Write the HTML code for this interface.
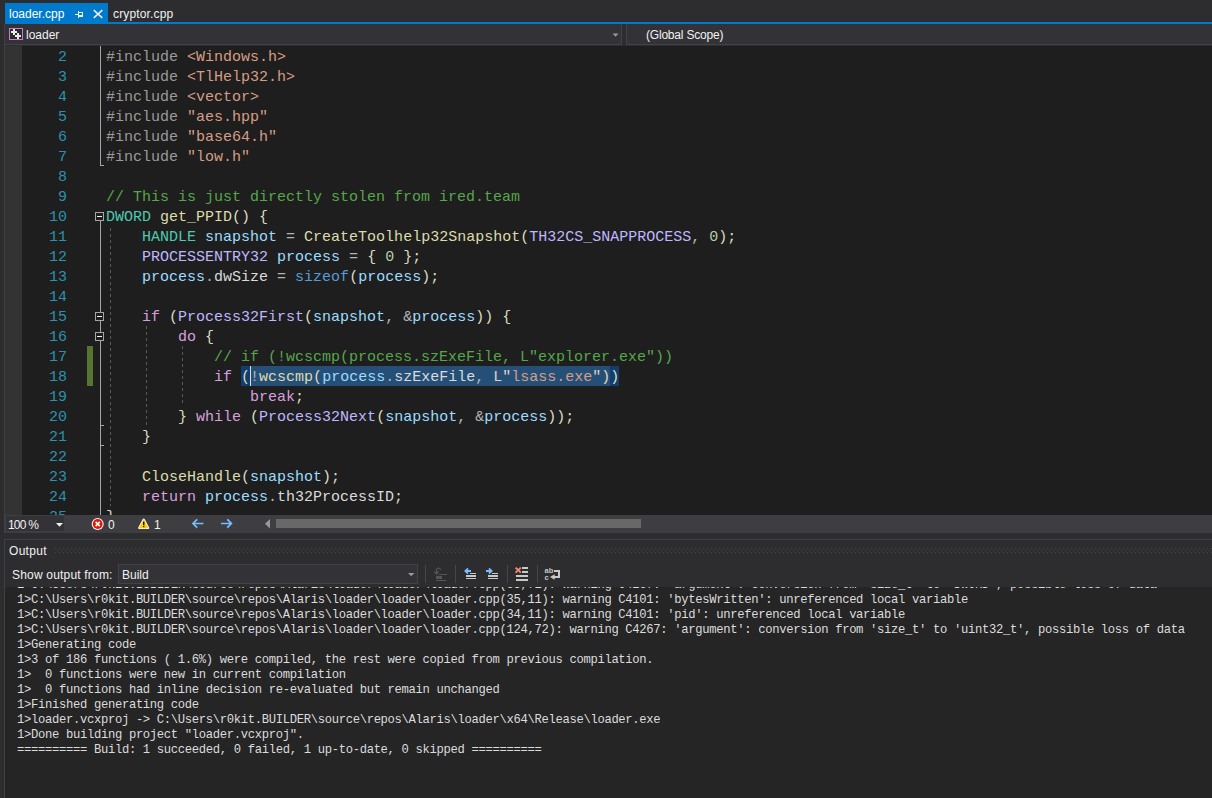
<!DOCTYPE html>
<html>
<head>
<meta charset="utf-8">
<style>
*{box-sizing:border-box;margin:0;padding:0}
html,body{width:1212px;height:798px;overflow:hidden;background:#2d2d30}
body{position:relative;font-family:"Liberation Sans",sans-serif;font-size:12px;color:#f1f1f1}
.abs{position:absolute}
.ui{position:absolute;white-space:pre;font-family:"Liberation Sans",sans-serif;font-size:12px;line-height:16px;color:#f1f1f1}
/* tab strip */
#tabact{left:5px;top:3px;width:103px;height:19px;background:#007acc}
#blueline{left:5px;top:22px;width:1207px;height:2px;background:#007acc}
/* nav bar */
#nav1{left:5px;top:24px;width:617px;height:21px;background:#333337;border-right:1px solid #434346;border-bottom:1px solid #434346}
#nav2{left:626px;top:24px;width:586px;height:21px;background:#333337;border-left:1px solid #434346;border-bottom:1px solid #434346}
/* editor */
#editor{left:5px;top:46px;width:1207px;height:469px;background:#1e1e1e;overflow:hidden}
#margin{left:0;top:0;width:17px;height:469px;background:#333333}
.ln{position:absolute;left:0;width:62px;text-align:right;color:#2b91af}
.row{position:absolute;left:0;height:20px;line-height:20px;padding-top:2px;box-sizing:content-box;white-space:pre;font-family:"Liberation Mono",monospace;font-size:15px;color:#dcdcdc}
.code{position:absolute;left:101px;top:2px}
.pp{color:#9b9b9b}.st{color:#d69d85}.cm{color:#57a64a}.ty{color:#4ec9b0}.fn{color:#dcdcaa}
.mc{color:#beb7ff}.lv{color:#9cdcfe}.kw{color:#569cd6}.ck{color:#d8a0df}.nm{color:#b5cea8}
.sd{color:#e6cfc2}.op{color:#b4b4b4}.mb{color:#dadada}.br{color:#dcdcc0}
/* bottom bar */
#hbar{left:5px;top:515px;width:1207px;height:18px;background:#3e3e42}
/* output */
#outpanel{left:4px;top:539px;width:1208px;height:259px;background:#2d2d30;border-top:1px solid #3f3f46;border-left:1px solid #3f3f46}
#outtext{left:5px;top:587px;width:1207px;height:211px;background:#252526;overflow:hidden}
.ol{position:absolute;left:12px;height:15px;line-height:15px;white-space:pre;font-family:"Liberation Mono",monospace;font-size:12.2px;letter-spacing:-0.321px;color:#dcdcdc}
</style>
</head>
<body>
<!-- TAB STRIP -->
<div class="abs" id="tabact"></div>
<div class="ui" style="left:9px;top:6px;color:#fff">loader.cpp</div>
<svg class="abs" style="left:74px;top:9px" width="12" height="11" viewBox="74 9 12 11" shape-rendering="crispEdges"><g fill="#f1f1f1"><rect x="75" y="14" width="3" height="1"/><rect x="78" y="11" width="1" height="7"/><rect x="79" y="12" width="4" height="1"/><rect x="82" y="12" width="1" height="5"/><rect x="79" y="15" width="4" height="2"/></g></svg>
<svg class="abs" style="left:92px;top:8px" width="13" height="12" viewBox="92 8 13 12"><path d="M93.8 10.1 L102.3 17.9 M102.3 10.1 L93.8 17.9" stroke="#f1f1f1" stroke-width="1.45" fill="none"/></svg>
<div class="ui" style="left:113px;top:6px;letter-spacing:0.15px">cryptor.cpp</div>
<div class="abs" id="blueline"></div>
<div class="abs" style="left:4px;top:24px;width:1px;height:509px;background:#3f3f46"></div>
<!-- NAV -->
<div class="abs" id="nav1"></div>
<div class="abs" id="nav2"></div>
<svg class="abs" style="left:9px;top:28px" width="14" height="12" viewBox="9 28 14 12" shape-rendering="crispEdges"><rect x="9.5" y="28.5" width="13" height="11" fill="#2a2a2d" stroke="#c27fc5"/><g fill="#e8e8e8"><rect x="13" y="29" width="2" height="6"/><rect x="11" y="31" width="6" height="2"/><rect x="17" y="33" width="2" height="6"/><rect x="15" y="35" width="6" height="2"/></g></svg>
<div class="ui" style="left:26px;top:27px">loader</div>
<svg class="abs" style="left:612px;top:33px" width="8" height="5" viewBox="0 0 8 5"><path d="M0.5 0.5 L6.5 0.5 L3.5 3.8 Z" fill="#999"/></svg>
<div class="ui" style="left:646px;top:27px;letter-spacing:-0.2px">(Global Scope)</div>
<!-- EDITOR -->
<div class="abs" id="editor">
<div class="abs" id="margin"></div>
<!-- change bar -->
<div class="abs" style="left:82px;top:300px;width:6px;height:40px;background:#577430"></div>
<!-- selection / brace match -->
<div class="abs" style="left:236px;top:320px;width:9px;height:20px;background:#113d6f"></div>
<div class="abs" style="left:245px;top:320px;width:360px;height:20px;background:#264f78"></div>
<div class="abs" style="left:605px;top:320px;width:9px;height:20px;background:#113d6f"></div>
<div class="abs" style="left:245px;top:320px;width:1px;height:20px;background:#dcdcdc"></div>
<!-- outlining -->
<svg class="abs" style="left:88px;top:0" width="110" height="469" viewBox="93 46 110 469" shape-rendering="crispEdges">
<g fill="#a5a5a5">
<rect x="100" y="46" width="1" height="120"/><rect x="100" y="165" width="4" height="1"/>
<rect x="100" y="221" width="1" height="91"/>
<rect x="100" y="321" width="1" height="11"/>
<rect x="100" y="341" width="1" height="174"/>
<rect x="100" y="425" width="4" height="1"/><rect x="100" y="445" width="4" height="1"/>
</g>
<g fill="#1e1e1e" stroke="#a5a5a5">
<rect x="95.5" y="212.5" width="8" height="8"/><rect x="95.5" y="312.5" width="8" height="8"/><rect x="95.5" y="332.5" width="8" height="8"/>
</g>
<g fill="#f1f1f1"><rect x="97" y="216" width="5" height="1"/><rect x="97" y="316" width="5" height="1"/><rect x="97" y="336" width="5" height="1"/></g>
<g stroke="#5a5a5a" stroke-width="1" stroke-dasharray="3 3" fill="none">
<path d="M110.5 228 V506"/><path d="M146.5 326 V426"/><path d="M182.5 346 V406"/>
</g>
</svg>

<div class="row" style="top:0px"><span class="ln">2</span><span class="code"><span class="pp">#include</span> <span class="st">&lt;Windows.h&gt;</span></span></div>
<div class="row" style="top:20px"><span class="ln">3</span><span class="code"><span class="pp">#include</span> <span class="st">&lt;TlHelp32.h&gt;</span></span></div>
<div class="row" style="top:40px"><span class="ln">4</span><span class="code"><span class="pp">#include</span> <span class="st">&lt;vector&gt;</span></span></div>
<div class="row" style="top:60px"><span class="ln">5</span><span class="code"><span class="pp">#include</span> <span class="st">"aes.hpp"</span></span></div>
<div class="row" style="top:80px"><span class="ln">6</span><span class="code"><span class="pp">#include</span> <span class="st">"base64.h"</span></span></div>
<div class="row" style="top:100px"><span class="ln">7</span><span class="code"><span class="pp">#include</span> <span class="st">"low.h"</span></span></div>
<div class="row" style="top:120px"><span class="ln">8</span><span class="code"></span></div>
<div class="row" style="top:140px"><span class="ln">9</span><span class="code"><span class="cm">// This is just directly stolen from ired.team</span></span></div>
<div class="row" style="top:160px"><span class="ln">10</span><span class="code"><span class="ty">DWORD</span> <span class="fn">get_PPID</span><span class="br">()</span> <span class="br">{</span></span></div>
<div class="row" style="top:180px"><span class="ln">11</span><span class="code">    <span class="ty">HANDLE</span> <span class="lv">snapshot</span> <span class="op">=</span> <span class="fn">CreateToolhelp32Snapshot</span><span class="br">(</span><span class="mc">TH32CS_SNAPPROCESS</span><span class="op">,</span> <span class="nm">0</span><span class="br">);</span></span></div>
<div class="row" style="top:200px"><span class="ln">12</span><span class="code">    <span class="mc">PROCESSENTRY32</span> <span class="lv">process</span> <span class="op">=</span> <span class="br">{</span> <span class="nm">0</span> <span class="br">};</span></span></div>
<div class="row" style="top:220px"><span class="ln">13</span><span class="code">    <span class="lv">process</span><span class="op">.</span><span class="mb">dwSize</span> <span class="op">=</span> <span class="kw">sizeof</span><span class="br">(</span><span class="lv">process</span><span class="br">);</span></span></div>
<div class="row" style="top:240px"><span class="ln">14</span><span class="code"></span></div>
<div class="row" style="top:260px"><span class="ln">15</span><span class="code">    <span class="ck">if</span> <span class="br">(</span><span class="mc">Process32First</span><span class="br">(</span><span class="lv">snapshot</span><span class="op">,</span> <span class="op">&amp;</span><span class="lv">process</span><span class="br">))</span> <span class="br">{</span></span></div>
<div class="row" style="top:280px"><span class="ln">16</span><span class="code">        <span class="ck">do</span> <span class="br">{</span></span></div>
<div class="row" style="top:300px"><span class="ln">17</span><span class="code">            <span class="cm">// if (!wcscmp(process.szExeFile, L"explorer.exe"))</span></span></div>
<div class="row" style="top:320px"><span class="ln">18</span><span class="code">            <span class="ck">if</span> <span class="br">(</span><span class="op">!</span><span class="fn">wcscmp</span><span class="br">(</span><span class="lv">process</span><span class="op">.</span><span class="mb">szExeFile</span><span class="op">,</span> <span class="sd">L"</span><span class="st">lsass.exe</span><span class="sd">"</span><span class="br">))</span></span></div>
<div class="row" style="top:340px"><span class="ln">19</span><span class="code">                <span class="ck">break</span><span class="br">;</span></span></div>
<div class="row" style="top:360px"><span class="ln">20</span><span class="code">        <span class="br">}</span> <span class="ck">while</span> <span class="br">(</span><span class="mc">Process32Next</span><span class="br">(</span><span class="lv">snapshot</span><span class="op">,</span> <span class="op">&amp;</span><span class="lv">process</span><span class="br">));</span></span></div>
<div class="row" style="top:380px"><span class="ln">21</span><span class="code">    <span class="br">}</span></span></div>
<div class="row" style="top:400px"><span class="ln">22</span><span class="code"></span></div>
<div class="row" style="top:420px"><span class="ln">23</span><span class="code">    <span class="fn">CloseHandle</span><span class="br">(</span><span class="lv">snapshot</span><span class="br">);</span></span></div>
<div class="row" style="top:440px"><span class="ln">24</span><span class="code">    <span class="ck">return</span> <span class="lv">process</span><span class="op">.</span><span class="mb">th32ProcessID</span><span class="br">;</span></span></div>
<div class="row" style="top:460px"><span class="ln">25</span><span class="code"><span class="br">}</span></span></div>
</div>
<!-- HBAR -->
<div class="abs" id="hbar"></div>
<div class="abs" style="left:6px;top:516px;width:58px;height:15px;background:#333337"></div>
<div class="ui" style="left:8px;top:517px;letter-spacing:-0.8px">100 %</div>
<svg class="abs" style="left:55px;top:522px" width="9" height="6" viewBox="55 522 9 6"><path d="M56 523 L63 523 L59.5 526.8 Z" fill="#f1f1f1"/></svg>
<!-- error icon -->
<svg class="abs" style="left:91px;top:517px" width="14" height="14" viewBox="91 517 14 14"><circle cx="97.7" cy="524" r="6" fill="#f6f6f6"/><circle cx="97.7" cy="524" r="4.9" fill="#e51400"/><path d="M95.6 521.9 L99.8 526.1 M99.8 521.9 L95.6 526.1" stroke="#fff" stroke-width="1.7"/></svg>
<div class="ui" style="left:108px;top:517px">0</div>
<!-- warning icon -->
<svg class="abs" style="left:136px;top:516px" width="16" height="15" viewBox="136 516 16 15"><path d="M143.7 519.6 L148.2 528 L139.2 528 Z" fill="#ffcc00" stroke="#f6f6f6" stroke-width="2.2" stroke-linejoin="round"/><path d="M143.7 519.8 L148 527.9 L139.4 527.9 Z" fill="#ffcc00" stroke="#ffcc00" stroke-width="0.6" stroke-linejoin="round"/><rect x="143.1" y="521.6" width="1.3" height="3.4" fill="#000"/><rect x="143.1" y="525.8" width="1.3" height="1.3" fill="#000"/></svg>
<div class="ui" style="left:154px;top:517px">1</div>
<!-- nav arrows -->
<svg class="abs" style="left:190px;top:517px" width="46" height="14" viewBox="190 517 46 14"><g stroke="#75beff" stroke-width="1.7" fill="none" stroke-linecap="square"><path d="M193.2 523.5 H202.6 M196.6 519.9 L193 523.5 L196.6 527.1"/><path d="M221.8 523.5 H231.2 M227.8 519.9 L231.4 523.5 L227.8 527.1"/></g></svg>
<!-- scrollbar -->
<svg class="abs" style="left:264px;top:518px" width="8" height="12" viewBox="264 518 8 12"><path d="M270 519 L270 528.5 L265 523.75 Z" fill="#999"/></svg>
<div class="abs" style="left:276px;top:519px;width:365px;height:9px;background:#686868"></div>
<!-- OUTPUT -->
<div class="abs" id="outpanel"></div>
<div class="ui" style="left:9px;top:543px;letter-spacing:0.3px">Output</div>
<svg class="abs" style="left:55px;top:548px" width="1157" height="5"><defs><pattern id="gr" x="0" y="0" width="4" height="4" patternUnits="userSpaceOnUse"><rect x="0" y="0" width="1" height="1" fill="#46464a"/><rect x="2" y="2" width="1" height="1" fill="#46464a"/></pattern></defs><rect x="0" y="0" width="1157" height="5" fill="url(#gr)" shape-rendering="crispEdges"/></svg>
<div class="ui" style="left:12px;top:567px;letter-spacing:0.19px">Show output from:</div>
<div class="abs" style="left:118px;top:564px;width:300px;height:20px;background:#333337;border:1px solid #434346"></div>
<div class="ui" style="left:122px;top:567px">Build</div>
<svg class="abs" style="left:407px;top:572px" width="9" height="6" viewBox="407 572 9 6"><path d="M408 573 L414.4 573 L411.2 576.3 Z" fill="#999"/></svg>
<!-- toolbar -->
<svg class="abs" style="left:420px;top:562px" width="150" height="24" viewBox="420 562 150 24" shape-rendering="crispEdges">
<g fill="#46464a"><rect x="425" y="565" width="1" height="18"/><rect x="455" y="565" width="1" height="18"/><rect x="507" y="565" width="1" height="18"/><rect x="537" y="565" width="1" height="18"/></g>
<!-- icon1 disabled -->
<g fill="#555558"><rect x="439" y="574" width="8" height="1"/><rect x="436" y="576" width="6" height="3"/><rect x="436" y="580" width="10" height="1"/></g>
<path d="M440.5 570 V569.5 A2.2 2.2 0 0 0 436.5 569.5 V573.5 M434.3 571.5 L436.5 574 L438.7 571.5" stroke="#555558" stroke-width="1.2" fill="none" shape-rendering="auto"/>
<!-- icon2 prev -->
<g fill="#c8c8c8"><rect x="470" y="573" width="6" height="1"/><rect x="466" y="575" width="10" height="2"/><rect x="466" y="578" width="10" height="1"/></g>
<path d="M464 571 L467.5 567.8 L468.6 569 L467.6 570 L471 570 L471 572 L467.6 572 L468.6 573 L467.5 574.2 Z" fill="#75beff" shape-rendering="auto"/>
<!-- icon3 next -->
<g fill="#c8c8c8"><rect x="492" y="573" width="6" height="1"/><rect x="488" y="575" width="10" height="2"/><rect x="488" y="578" width="10" height="1"/></g>
<path d="M493 571 L489.5 567.8 L488.4 569 L489.4 570 L486 570 L486 572 L489.4 572 L488.4 573 L489.5 574.2 Z" fill="#75beff" shape-rendering="auto"/>
<!-- icon4 clear -->
<g fill="#c8c8c8"><rect x="522" y="567" width="6" height="2"/><rect x="522" y="571" width="6" height="2"/><rect x="516" y="575" width="12" height="2"/><rect x="516" y="579" width="12" height="2"/></g>
<path d="M515.6 567.6 L520.8 572.6 M520.8 567.6 L515.6 572.6" stroke="#f48771" stroke-width="1.9" fill="none" shape-rendering="auto"/>
<!-- icon5 wrap -->
<g fill="#c8c8c8"><rect x="554" y="570" width="6" height="2"/><rect x="558" y="570" width="2" height="8"/><rect x="553" y="576" width="7" height="2"/></g>
<path d="M550 577 L554.6 574.2 L554.6 579.8 Z" fill="#c8c8c8" shape-rendering="auto"/>
</svg>
<div class="abs" style="left:544.5px;top:567.4px;font:bold 7.5px/8px 'Liberation Sans',sans-serif;color:#c8c8c8;white-space:pre">ab</div>
<div class="abs" style="left:544.5px;top:573.8px;font:bold 7.5px/8px 'Liberation Sans',sans-serif;color:#c8c8c8;white-space:pre">c</div>
<div class="abs" id="outtext">
<div class="ol" style="top:-9px">1&gt;C:\Users\r0kit.BUILDER\source\repos\Alaris\loader\loader\loader.cpp(83,71): warning C4267: 'argument': conversion from 'size_t' to 'DWORD', possible loss of data</div>
<div class="ol" style="top:6px">1&gt;C:\Users\r0kit.BUILDER\source\repos\Alaris\loader\loader\loader.cpp(35,11): warning C4101: 'bytesWritten': unreferenced local variable</div>
<div class="ol" style="top:21px">1&gt;C:\Users\r0kit.BUILDER\source\repos\Alaris\loader\loader\loader.cpp(34,11): warning C4101: 'pid': unreferenced local variable</div>
<div class="ol" style="top:36px">1&gt;C:\Users\r0kit.BUILDER\source\repos\Alaris\loader\loader\loader.cpp(124,72): warning C4267: 'argument': conversion from 'size_t' to 'uint32_t', possible loss of data</div>
<div class="ol" style="top:51px">1&gt;Generating code</div>
<div class="ol" style="top:66px">1&gt;3 of 186 functions ( 1.6%) were compiled, the rest were copied from previous compilation.</div>
<div class="ol" style="top:81px">1&gt;  0 functions were new in current compilation</div>
<div class="ol" style="top:96px">1&gt;  0 functions had inline decision re-evaluated but remain unchanged</div>
<div class="ol" style="top:111px">1&gt;Finished generating code</div>
<div class="ol" style="top:126px">1&gt;loader.vcxproj -&gt; C:\Users\r0kit.BUILDER\source\repos\Alaris\loader\x64\Release\loader.exe</div>
<div class="ol" style="top:141px">1&gt;Done building project "loader.vcxproj".</div>
<div class="ol" style="top:156px">========== Build: 1 succeeded, 0 failed, 1 up-to-date, 0 skipped ==========</div>
</div>
</body>
</html>
